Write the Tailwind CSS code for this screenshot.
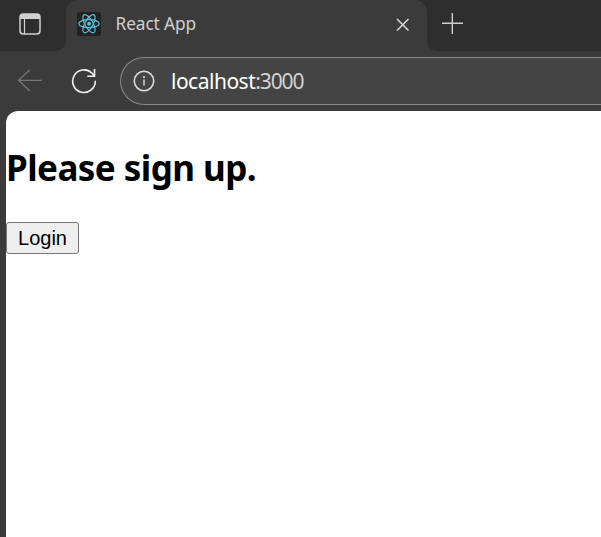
<!DOCTYPE html>
<html lang="en">
<head>
<meta charset="utf-8">
<title>React App</title>
<script src="https://cdn.jsdelivr.net/npm/@tailwindcss/browser@4"></script>
</head>
<body class="h-[537px] w-[601px] overflow-hidden bg-[#3b3b3b] flex flex-col font-['Noto_Sans',sans-serif]">
  <!-- Tab strip -->
  <header class="flex h-[51px] shrink-0 bg-[#3b3b3b]">
    <div class="w-[66px] shrink-0 rounded-br-[10px] bg-[#2e2e2e] pl-[19px] pt-[13px]">
      <svg class="block" width="22" height="22" viewBox="0 0 22 22" fill="none">
        <rect x="1" y="1" width="20" height="20" rx="3.2" stroke="#d0d0d0" stroke-width="1.5"/>
        <path d="M1 6V4a3 3 0 0 1 3-3h14a3 3 0 0 1 3 3v2z" fill="#d0d0d0"/>
        <path d="M5.5 6v15" stroke="#d0d0d0" stroke-width="1.2"/>
      </svg>
    </div>
    <div class="w-[361px] shrink-0 bg-[#2e2e2e] h-[38px]">
      <div class="flex h-[51px] items-start rounded-t-[12px] bg-[#3b3b3b] pl-[11px]">
        <svg class="mt-3 block shrink-0" width="24" height="24" viewBox="0 0 24 24" fill="none">
          <rect width="24" height="24" rx="2.5" fill="#222"/>
          <g stroke="#58c4dc" stroke-width="1.2">
            <ellipse cx="12" cy="11.7" rx="10.2" ry="4"/>
            <ellipse cx="12" cy="11.7" rx="10.2" ry="4" transform="rotate(60 12 11.7)"/>
            <ellipse cx="12" cy="11.7" rx="10.2" ry="4" transform="rotate(120 12 11.7)"/>
          </g>
          <circle cx="12" cy="11.7" r="2" fill="#58c4dc"/>
        </svg>
        <span class="ml-[14.5px] mt-3 w-[80.5px] whitespace-nowrap text-[17.3px] leading-6 tracking-[-0.1px] text-[#cfcfcf]">React App</span>
        <svg class="ml-[200px] mt-[18px] block shrink-0" width="14" height="14" viewBox="0 0 14 14" fill="none" stroke="#d6d6d6" stroke-width="1.6">
          <path d="M1 1l11.5 11.5M12.500 1L1 12.500"/>
        </svg>
      </div>
    </div>
    <div class="grow rounded-bl-[10px] bg-[#2e2e2e] pl-[15px] pt-[13px]">
      <svg class="block" width="21" height="21" viewBox="0 0 21 21" fill="none" stroke="#cecece" stroke-width="1.4">
        <path d="M0 10.300h21M10.300 0v21"/>
      </svg>
    </div>
  </header>
  <!-- Navigation bar -->
  <nav class="flex h-[60px] shrink-0 pt-[6px]">
    <svg class="ml-[17px] mt-3 block shrink-0" width="26" height="23" viewBox="0 0 26 23" fill="none" stroke="#777" stroke-width="1.3">
      <path d="M25 11.300H1.500M12.700 1L1.500 11.300L12.700 22"/>
    </svg>
    <svg class="ml-[28px] mt-[11px] block shrink-0" width="27" height="27" viewBox="0 0 27 27" fill="none" stroke="#f1f1f1" stroke-width="1.6">
      <path d="M24.300 12.800A11.300 11.300 0 1 1 20.800 5L23.500 7.900"/>
      <path d="M23.500 1V8.200H16.300"/>
    </svg>
    <div class="ml-[22px] flex h-12 min-w-0 grow rounded-l-full border-y border-l border-[#8a8a8a] bg-[#444]">
      <svg class="ml-3 mt-[12px] block shrink-0" width="22" height="22" viewBox="0 0 22 22" fill="none">
        <circle cx="11" cy="11" r="9.700" stroke="#dedede" stroke-width="1.5"/>
        <circle cx="11" cy="7" r="1" fill="#dedede"/>
        <path d="M11 9.500v6" stroke="#dedede" stroke-width="1.400"/>
      </svg>
      <span class="ml-[16px] mt-[8px] whitespace-nowrap text-[21px] leading-[30px] tracking-[-0.5px] text-white">localhost<span class="tracking-[-1.1px] text-[#d2d2d2]">:3000</span></span>
    </div>
  </nav>
  <!-- Page -->
  <main class="ml-[6px] grow rounded-tl-[12px] bg-white text-black">
    <h1 class="pt-[33px] whitespace-nowrap text-[35px] font-bold leading-[48px] tracking-[-0.55px]">Please sign up.</h1>
    <button class="mt-[30px] flex h-8 w-[73px] items-center justify-center rounded-[3px] border border-[#767676] bg-[#efefef] font-['Liberation_Sans',sans-serif] text-[20px] leading-none">Login</button>
  </main>
</body>
</html>
